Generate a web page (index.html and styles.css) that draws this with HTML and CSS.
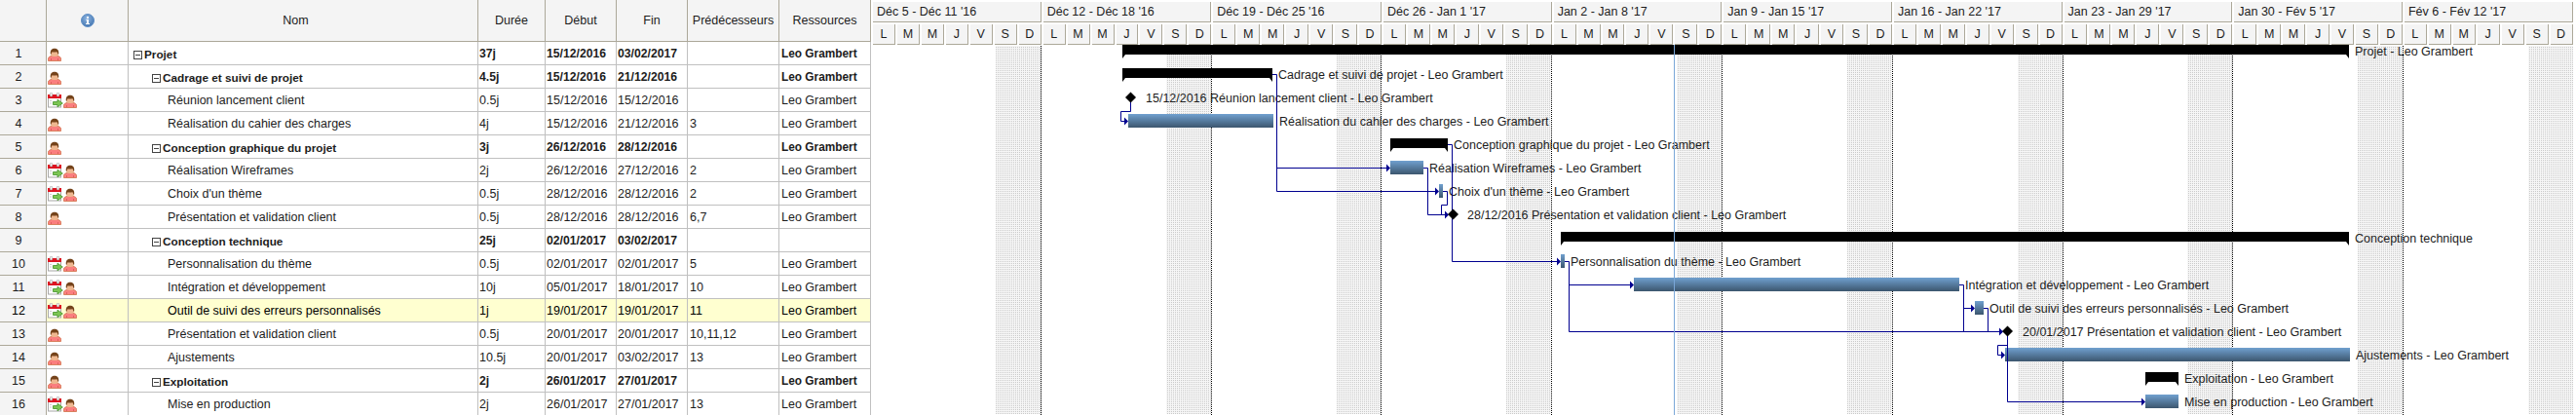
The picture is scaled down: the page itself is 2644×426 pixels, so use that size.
FILE: index.html
```html
<!DOCTYPE html>
<html lang="fr">
<head>
<meta charset="utf-8">
<title>Diagramme de Gantt</title>
<link rel="stylesheet" href="styles.css">
</head>
<body>
<svg class="defs" width="0" height="0" aria-hidden="true">
  <defs>
    <symbol id="i-person" viewBox="0 0 16 16">
      <path d="M0.5 15.5 V13.2 C0.5 11.4 2.5 10.8 4.5 10.2 H9.5 C11.5 10.8 13.5 11.4 13.5 13.2 V15.5 Z" fill="#fa7f7f" stroke="#d9825f" stroke-width="1"/>
      <path d="M3.5 15 V13 M10.5 15 V13" stroke="#e06060" stroke-width="1"/>
      <rect x="3" y="4" width="8" height="7" rx="3" fill="#eeb78f"/>
      <path d="M2.8 8.5 C2.4 4.4 4.4 2.8 7 2.8 C9.6 2.8 11.6 4.4 11.2 8.5 H10.2 C10.2 7.2 9.9 6.6 9.2 6.2 C7.6 6.7 5.6 6.7 4.8 6.3 C4.1 6.7 3.8 7.2 3.8 8.5 Z" fill="#74431b"/>
    </symbol>
    <symbol id="i-cal" viewBox="0 0 16 16">
      <rect x="0.5" y="3.5" width="13" height="11.5" fill="#fefefe" stroke="#a8a8a8"/>
      <rect x="0" y="2" width="14" height="4" fill="#dd1420"/>
      <rect x="2.3" y="0.3" width="2.4" height="3.6" rx="1" fill="#f6f6f6" stroke="#9a9a9a" stroke-width=".6"/>
      <rect x="9.3" y="0.3" width="2.4" height="3.6" rx="1" fill="#f6f6f6" stroke="#9a9a9a" stroke-width=".6"/>
      <path d="M2 8.5 H4 M2 11 H4" stroke="#cfcfcf"/>
      <path d="M5.5 9.5 H10 V7.2 L15.3 11 L10 14.8 V12.5 H5.5 Z" fill="#7cc653" stroke="#4f9a35" stroke-width=".9"/>
    </symbol>
    <linearGradient id="barfill" x1="0" y1="0" x2="0" y2="1">
      <stop offset="0" stop-color="#70a0cf"/>
      <stop offset="1" stop-color="#3c566e"/>
    </linearGradient>
    <radialGradient id="infofill" cx=".45" cy=".35" r=".7">
      <stop offset="0" stop-color="#8fb6e2"/>
      <stop offset="1" stop-color="#3f72ad"/>
    </radialGradient>
    <pattern id="dots" width="2" height="2" patternUnits="userSpaceOnUse">
      <rect width="2" height="2" fill="#f6f6f6"/>
      <rect width="1" height="1" fill="#cacaca"/>
    </pattern>
  </defs>
</svg>

<div class="page">
  <table class="grid">
    <colgroup>
      <col class="c-num"><col class="c-ico"><col class="c-name"><col class="c-dur"><col class="c-date"><col class="c-date"><col class="c-res"><col class="c-res">
    </colgroup>
    <thead>
      <tr>
        <th></th>
        <th>
          <svg class="info" width="14" height="14" viewBox="0 0 14 14">
            <circle cx="7" cy="7" r="6.5" fill="url(#infofill)" stroke="#5f8fc6"/>
            <path d="M6 3 H8 V5 H6 Z M5.5 6 H8 V10 H9 V11 H5 V10 H6 V7 H5.5 Z" fill="#fff"/>
          </svg>
        </th>
        <th class="h-name">Nom</th>
        <th>Durée</th><th>Début</th><th>Fin</th><th>Prédécesseurs</th><th>Ressources</th>
      </tr>
    </thead>
    <tbody>
      <tr class="sum"><td class="num">1</td><td class="ico"><div class="icons"><svg class="ic"><use href="#i-person"/></svg></div></td><td class="name lv0"><span class="tree"></span>Projet</td><td class="tight">37j</td><td class="tight">15/12/2016</td><td class="tight">03/02/2017</td><td class="wide"></td><td class="wide">Leo Grambert</td></tr>
      <tr class="sum"><td class="num">2</td><td class="ico"><div class="icons"><svg class="ic"><use href="#i-person"/></svg></div></td><td class="name lv1"><span class="tree"></span>Cadrage et suivi de projet</td><td class="tight">4.5j</td><td class="tight">15/12/2016</td><td class="tight">21/12/2016</td><td class="wide"></td><td class="wide">Leo Grambert</td></tr>
      <tr><td class="num">3</td><td class="ico"><div class="icons"><svg class="ic"><use href="#i-cal"/></svg><svg class="ic"><use href="#i-person"/></svg></div></td><td class="name leaf">Réunion lancement client</td><td class="tight">0.5j</td><td class="tight">15/12/2016</td><td class="tight">15/12/2016</td><td class="wide"></td><td class="wide">Leo Grambert</td></tr>
      <tr><td class="num">4</td><td class="ico"><div class="icons"><svg class="ic"><use href="#i-person"/></svg></div></td><td class="name leaf">Réalisation du cahier des charges</td><td class="tight">4j</td><td class="tight">15/12/2016</td><td class="tight">21/12/2016</td><td class="wide">3</td><td class="wide">Leo Grambert</td></tr>
      <tr class="sum"><td class="num">5</td><td class="ico"><div class="icons"><svg class="ic"><use href="#i-person"/></svg></div></td><td class="name lv1"><span class="tree"></span>Conception graphique du projet</td><td class="tight">3j</td><td class="tight">26/12/2016</td><td class="tight">28/12/2016</td><td class="wide"></td><td class="wide">Leo Grambert</td></tr>
      <tr><td class="num">6</td><td class="ico"><div class="icons"><svg class="ic"><use href="#i-cal"/></svg><svg class="ic"><use href="#i-person"/></svg></div></td><td class="name leaf">Réalisation Wireframes</td><td class="tight">2j</td><td class="tight">26/12/2016</td><td class="tight">27/12/2016</td><td class="wide">2</td><td class="wide">Leo Grambert</td></tr>
      <tr><td class="num">7</td><td class="ico"><div class="icons"><svg class="ic"><use href="#i-cal"/></svg><svg class="ic"><use href="#i-person"/></svg></div></td><td class="name leaf">Choix d'un thème</td><td class="tight">0.5j</td><td class="tight">28/12/2016</td><td class="tight">28/12/2016</td><td class="wide">2</td><td class="wide">Leo Grambert</td></tr>
      <tr><td class="num">8</td><td class="ico"><div class="icons"><svg class="ic"><use href="#i-person"/></svg></div></td><td class="name leaf">Présentation et validation client</td><td class="tight">0.5j</td><td class="tight">28/12/2016</td><td class="tight">28/12/2016</td><td class="wide">6,7</td><td class="wide">Leo Grambert</td></tr>
      <tr class="sum"><td class="num">9</td><td class="ico"></td><td class="name lv1"><span class="tree"></span>Conception technique</td><td class="tight">25j</td><td class="tight">02/01/2017</td><td class="tight">03/02/2017</td><td class="wide"></td><td class="wide"></td></tr>
      <tr><td class="num">10</td><td class="ico"><div class="icons"><svg class="ic"><use href="#i-cal"/></svg><svg class="ic"><use href="#i-person"/></svg></div></td><td class="name leaf">Personnalisation du thème</td><td class="tight">0.5j</td><td class="tight">02/01/2017</td><td class="tight">02/01/2017</td><td class="wide">5</td><td class="wide">Leo Grambert</td></tr>
      <tr><td class="num">11</td><td class="ico"><div class="icons"><svg class="ic"><use href="#i-cal"/></svg><svg class="ic"><use href="#i-person"/></svg></div></td><td class="name leaf">Intégration et développement</td><td class="tight">10j</td><td class="tight">05/01/2017</td><td class="tight">18/01/2017</td><td class="wide">10</td><td class="wide">Leo Grambert</td></tr>
      <tr class="sel"><td class="num">12</td><td class="ico"><div class="icons"><svg class="ic"><use href="#i-cal"/></svg><svg class="ic"><use href="#i-person"/></svg></div></td><td class="name leaf">Outil de suivi des erreurs personnalisés</td><td class="tight">1j</td><td class="tight">19/01/2017</td><td class="tight">19/01/2017</td><td class="wide">11</td><td class="wide">Leo Grambert</td></tr>
      <tr><td class="num">13</td><td class="ico"><div class="icons"><svg class="ic"><use href="#i-person"/></svg></div></td><td class="name leaf">Présentation et validation client</td><td class="tight">0.5j</td><td class="tight">20/01/2017</td><td class="tight">20/01/2017</td><td class="wide">10,11,12</td><td class="wide">Leo Grambert</td></tr>
      <tr><td class="num">14</td><td class="ico"><div class="icons"><svg class="ic"><use href="#i-person"/></svg></div></td><td class="name leaf">Ajustements</td><td class="tight">10.5j</td><td class="tight">20/01/2017</td><td class="tight">03/02/2017</td><td class="wide">13</td><td class="wide">Leo Grambert</td></tr>
      <tr class="sum"><td class="num">15</td><td class="ico"><div class="icons"><svg class="ic"><use href="#i-person"/></svg></div></td><td class="name lv1"><span class="tree"></span>Exploitation</td><td class="tight">2j</td><td class="tight">26/01/2017</td><td class="tight">27/01/2017</td><td class="wide"></td><td class="wide">Leo Grambert</td></tr>
      <tr><td class="num">16</td><td class="ico"><div class="icons"><svg class="ic"><use href="#i-cal"/></svg><svg class="ic"><use href="#i-person"/></svg></div></td><td class="name leaf">Mise en production</td><td class="tight">2j</td><td class="tight">26/01/2017</td><td class="tight">27/01/2017</td><td class="wide">13</td><td class="wide">Leo Grambert</td></tr>
    </tbody>
  </table>

  <section class="gantt">
    <div class="weeks">
      <div class="week">Déc 5 - Déc 11 '16</div>
      <div class="week">Déc 12 - Déc 18 '16</div>
      <div class="week">Déc 19 - Déc 25 '16</div>
      <div class="week">Déc 26 - Jan 1 '17</div>
      <div class="week">Jan 2 - Jan 8 '17</div>
      <div class="week">Jan 9 - Jan 15 '17</div>
      <div class="week">Jan 16 - Jan 22 '17</div>
      <div class="week">Jan 23 - Jan 29 '17</div>
      <div class="week">Jan 30 - Fév 5 '17</div>
      <div class="week">Fév 6 - Fév 12 '17</div>
    </div>
    <div class="days">
      <div class="day">L</div><div class="day">M</div><div class="day">M</div><div class="day">J</div><div class="day">V</div><div class="day">S</div><div class="day">D</div>
      <div class="day">L</div><div class="day">M</div><div class="day">M</div><div class="day">J</div><div class="day">V</div><div class="day">S</div><div class="day">D</div>
      <div class="day">L</div><div class="day">M</div><div class="day">M</div><div class="day">J</div><div class="day">V</div><div class="day">S</div><div class="day">D</div>
      <div class="day">L</div><div class="day">M</div><div class="day">M</div><div class="day">J</div><div class="day">V</div><div class="day">S</div><div class="day">D</div>
      <div class="day">L</div><div class="day">M</div><div class="day">M</div><div class="day">J</div><div class="day">V</div><div class="day">S</div><div class="day">D</div>
      <div class="day">L</div><div class="day">M</div><div class="day">M</div><div class="day">J</div><div class="day">V</div><div class="day">S</div><div class="day">D</div>
      <div class="day">L</div><div class="day">M</div><div class="day">M</div><div class="day">J</div><div class="day">V</div><div class="day">S</div><div class="day">D</div>
      <div class="day">L</div><div class="day">M</div><div class="day">M</div><div class="day">J</div><div class="day">V</div><div class="day">S</div><div class="day">D</div>
      <div class="day">L</div><div class="day">M</div><div class="day">M</div><div class="day">J</div><div class="day">V</div><div class="day">S</div><div class="day">D</div>
      <div class="day">L</div><div class="day">M</div><div class="day">M</div><div class="day">J</div><div class="day">V</div><div class="day">S</div><div class="day">D</div>
    </div>

    <svg class="chart" width="1748" height="379" viewBox="896 47 1748 379">
      <g class="weekend">
        <rect x="1022" y="47" width="47" height="378"/>
        <rect x="1197" y="47" width="46" height="378"/>
        <rect x="1372" y="47" width="46" height="378"/>
        <rect x="1546" y="47" width="46" height="378"/>
        <rect x="1721" y="47" width="46" height="378"/>
        <rect x="1896" y="47" width="46" height="378"/>
        <rect x="2071" y="47" width="46" height="378"/>
        <rect x="2245" y="47" width="47" height="378"/>
        <rect x="2420" y="47" width="46" height="378"/>
        <rect x="2595" y="47" width="46" height="378"/>
      </g>
      <path class="weekline" d="M1068.5 47V426M1243.5 47V426M1417.5 47V426M1592.5 47V426M1767.5 47V426M1942.5 47V426M2117.5 47V426M2291.5 47V426M2466.5 47V426"/>

      <g class="labels">
        <text x="2417" y="57">Projet - Leo Grambert</text>
        <text x="1312" y="81">Cadrage et suivi de projet - Leo Grambert</text>
        <text x="1176" y="105">15/12/2016 Réunion lancement client - Leo Grambert</text>
        <text x="1313" y="129">Réalisation du cahier des charges - Leo Grambert</text>
        <text x="1492" y="153">Conception graphique du projet - Leo Grambert</text>
        <text x="1467" y="177">Réalisation Wireframes - Leo Grambert</text>
        <text x="1487" y="201">Choix d'un thème - Leo Grambert</text>
        <text x="1506" y="225">28/12/2016 Présentation et validation client - Leo Grambert</text>
        <text x="2417" y="249">Conception technique</text>
        <text x="1612" y="273">Personnalisation du thème - Leo Grambert</text>
        <text x="2017" y="297">Intégration et développement - Leo Grambert</text>
        <text x="2042" y="321">Outil de suivi des erreurs personnalisés - Leo Grambert</text>
        <text x="2076" y="345">20/01/2017 Présentation et validation client - Leo Grambert</text>
        <text x="2418" y="369">Ajustements - Leo Grambert</text>
        <text x="2242" y="393">Exploitation - Leo Grambert</text>
        <text x="2242" y="417">Mise en production - Leo Grambert</text>
      </g>

      <g class="summary">
        <polygon points="1152,46 2411,46 2411,60 2408,56 1155,56 1152,60"/>
        <polygon points="1152,70 1306,70 1306,84 1303,80 1155,80 1152,84"/>
        <polygon points="1427,142 1486,142 1486,156 1483,152 1430,152 1427,156"/>
        <polygon points="1602,238 2411,238 2411,252 2408,248 1605,248 1602,252"/>
        <polygon points="2202,382 2236,382 2236,396 2233,392 2205,392 2202,396"/>
      </g>

      <g class="bars">
        <rect x="1158" y="117" width="149" height="14"/>
        <rect x="1427" y="165" width="34" height="14"/>
        <rect x="1477" y="189" width="4" height="14"/>
        <rect x="1602" y="261" width="4" height="14"/>
        <rect x="1677" y="285" width="334" height="14"/>
        <rect x="2027" y="309" width="9" height="14"/>
        <rect x="2058" y="357" width="354" height="14"/>
        <rect x="2202" y="405" width="34" height="14"/>
      </g>

      <g class="links">
        <path d="M1160.5 105V114.5H1150.5V124.5H1155"/>
        <path d="M1306 76.5H1310.5V196.5H1474M1310.5 172.5H1424"/>
        <path d="M1486 148.5H1490.5V268.5H1599"/>
        <path d="M1461 172.5H1465.5V220.5H1484"/>
        <path d="M1481 196.5H1485.5V210.5H1479.5V220.5"/>
        <path d="M1606 268.5H1610.5V340.5H2053M1610.5 292.5H1674"/>
        <path d="M2011 292.5H2015.5V340.5M2015.5 316.5H2024"/>
        <path d="M2036 316.5H2040.5V340.5"/>
        <path d="M2060.5 345V412.5H2199M2060.5 354.5H2050.5V364.5H2055"/>
      </g>
      <g class="heads">
        <polygon points="1154,120.5 1158,124.5 1154,128.5"/>
        <polygon points="1423,168.5 1427,172.5 1423,176.5"/>
        <polygon points="1473,192.5 1477,196.5 1473,200.5"/>
        <polygon points="1483,216.5 1487,220.5 1483,224.5"/>
        <polygon points="1598,264.5 1602,268.5 1598,272.5"/>
        <polygon points="1673,288.5 1677,292.5 1673,296.5"/>
        <polygon points="2023,312.5 2027,316.5 2023,320.5"/>
        <polygon points="2052,336.5 2056,340.5 2052,344.5"/>
        <polygon points="2054,360.5 2058,364.5 2054,368.5"/>
        <polygon points="2198,408.5 2202,412.5 2198,416.5"/>
      </g>

      <g class="miles">
        <polygon points="1160.5,94.5 1166,100 1160.5,105.5 1155,100"/>
        <polygon points="1491.5,214.5 1497,220 1491.5,225.5 1486,220"/>
        <polygon points="2060.5,334.5 2066,340 2060.5,345.5 2055,340"/>
      </g>

      <line class="today" x1="1718.5" y1="46" x2="1718.5" y2="426"/>
    </svg>
  </section>
</div>
</body>
</html>
```

FILE: styles.css
```css
html, body {
  margin: 0;
  padding: 0;
  background: #fff;
  overflow: hidden;
}

body {
  width: 2644px;
  height: 426px;
  font-family: "Liberation Sans", Arial, sans-serif;
  font-size: 12.5px;
  color: #1c1c1c;
}

.defs {
  display: block;
  height: 0;
}

.page {
  display: flex;
  align-items: flex-start;
  gap: 2px;
  height: 426px;
  overflow: hidden;
}

/* ---- task table ---- */
.grid {
  flex: none;
  width: 894px;
  table-layout: fixed;
  border-collapse: separate;
  border-spacing: 0;
}

.c-num { width: 48px; }
.c-ico { width: 84px; }
.c-name { width: 359px; }
.c-dur { width: 69px; }
.c-date { width: 73px; }
.c-res { width: 94px; }

.grid th {
  height: 42px;
  padding: 0;
  background: #f4f4f4;
  border-right: 1px solid #aca899;
  border-bottom: 1px solid #aca899;
  font-weight: normal;
  text-align: center;
  vertical-align: middle;
}

.grid th.h-name { padding-right: 15px; }

.info {
  display: block;
  margin: 0 auto 1px;
}

.grid td {
  box-sizing: border-box;
  height: 24px;
  padding: 1px 0 0;
  background: #fff;
  border-right: 1px solid #c0c0c0;
  border-bottom: 1px solid #c0c0c0;
  white-space: nowrap;
  overflow: hidden;
  vertical-align: middle;
}

.grid td.num {
  padding-right: 9px;
  background: #f4f4f4;
  border-right-color: #aca899;
  border-bottom-color: #aca899;
  text-align: center;
}

.grid td.ico {
  padding: 4px 0 0 1px;
  vertical-align: top;
}

.icons { display: flex; }

.ic {
  display: block;
  width: 16px;
  height: 16px;
}

.grid td.tight { padding-left: 1px; }
.grid td.wide { padding-left: 2px; }

.grid td.lv0 { padding-left: 5px; }
.grid td.lv1 { padding-left: 24px; }
.grid td.leaf { padding-left: 40px; }

.tree {
  display: inline-block;
  position: relative;
  box-sizing: border-box;
  width: 9px;
  height: 9px;
  margin-right: 2px;
  border: 1px solid #444;
  vertical-align: -1px;
}

.tree::before {
  content: "";
  position: absolute;
  left: 1px;
  right: 1px;
  top: 3px;
  height: 1px;
  background: #444;
}

.sum td { font-weight: bold; font-size: 12.2px; }
.sum td.name { font-size: 11.75px; }
.sum td.wide { font-size: 11.85px; }
.sum td.num { font-weight: normal; font-size: 12.5px; }

.sel td { color: #000; }
.sel td:not(.num) { background: #ffffd0; }

/* ---- timeline header ---- */
.gantt {
  flex: none;
  width: 1748px;
}

.weeks {
  display: grid;
  grid-template-columns: repeat(10, 1fr);
  gap: 2px;
  width: 1744.6px;
  margin-top: 2px;
}

.week {
  box-sizing: border-box;
  height: 21px;
  padding-left: 4px;
  background: #f4f4f4;
  border-right: 1px solid #aca899;
  border-bottom: 1px solid #aca899;
  line-height: 20px;
  white-space: nowrap;
}

.days {
  display: grid;
  grid-template-columns: repeat(70, 1fr);
  gap: 2px;
  width: 1744.5px;
  margin-top: 2px;
}

.day {
  box-sizing: border-box;
  height: 21px;
  background: #f4f4f4;
  border-right: 1px solid #aca899;
  border-bottom: 1px solid #aca899;
  line-height: 20px;
  text-align: center;
}

/* ---- timeline body ---- */
.chart {
  display: block;
  margin-top: 1px;
  overflow: visible;
}

.weekend rect {
  fill: url(#dots);
}

.weekline {
  fill: none;
  stroke: #000;
  stroke-width: 1;
  stroke-dasharray: 1 1;
}

.labels text {
  font-family: "Liberation Sans", Arial, sans-serif;
  font-size: 12.5px;
  fill: #1c1c1c;
}

.summary polygon,
.miles polygon {
  fill: #000;
}

.bars rect {
  fill: url(#barfill);
}

.links path {
  fill: none;
  stroke: #00008f;
  stroke-width: 1;
}

.heads polygon {
  fill: #00008f;
}

.today {
  stroke: #7aa7d8;
  stroke-width: 1;
}
```
